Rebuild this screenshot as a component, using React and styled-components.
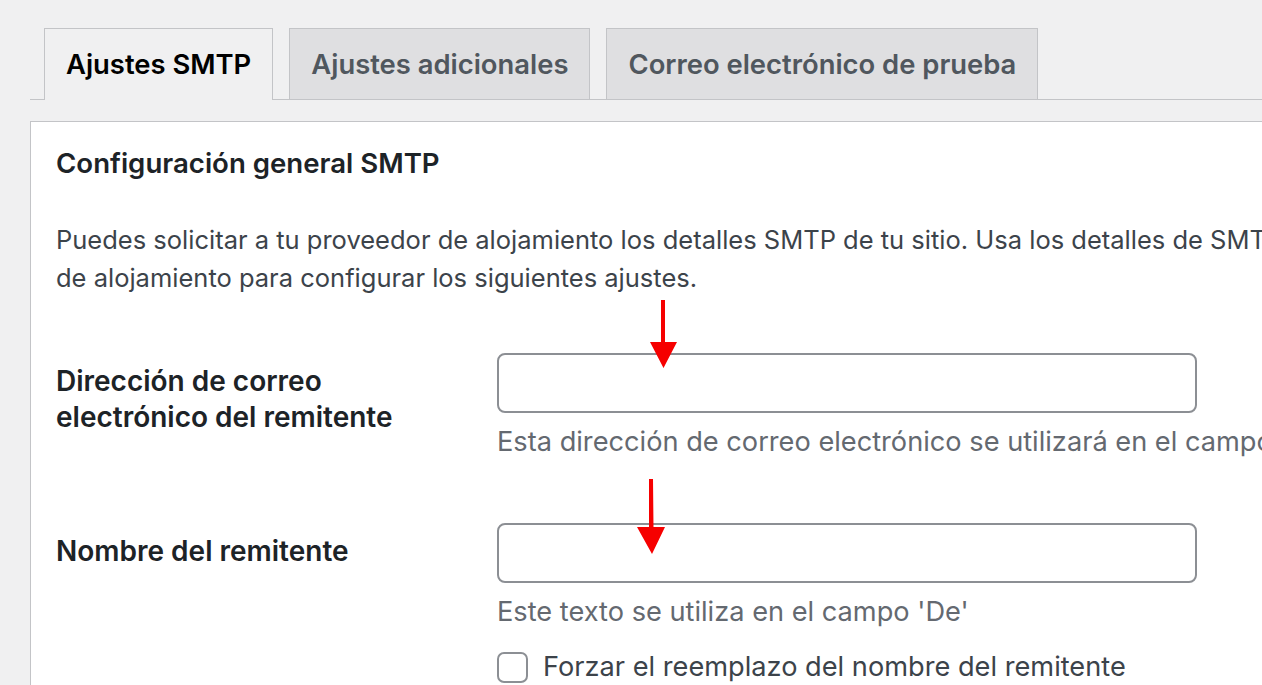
import React from 'react';
import styled, { createGlobalStyle } from 'styled-components';

const GlobalStyle = createGlobalStyle`
  html, body {
    margin: 0;
    padding: 0;
    background: #f0f0f1;
    overflow: hidden;
  }
  body {
    font-family: Inter, "Noto Sans", "Liberation Sans", sans-serif;
    color: #3c434a;
  }
`;

const Page = styled.div`
  position: relative;
  width: 1262px;
  height: 685px;
  padding: 28px 0 0 30px;
  box-sizing: border-box;
  overflow: hidden;
`;

const TabBar = styled.nav`
  display: flex;
  gap: 16px;
  padding-left: 14px;
  border-bottom: 1px solid #c3c4c7;
  margin-right: -30px;
`;

const Tab = styled.a`
  display: flex;
  align-items: center;
  padding: 0 21px 1px;
  box-sizing: border-box;
  border: 1px solid #c3c4c7;
  border-bottom: none;
  margin-bottom: ${p => (p.$active ? '-1px' : '0')};
  height: ${p => (p.$active ? '72px' : '71px')};
  background: ${p => (p.$active ? '#f0f0f1' : '#dfdfe1')};
  color: ${p => (p.$active ? '#000' : '#50575e')};
  font-size: 27.4px;
  font-weight: 600;
  white-space: nowrap;
`;

const Panel = styled.div`
  margin-top: 21px;
  width: 1300px;
  min-height: 600px;
  background: #fff;
  border: 1px solid #c3c4c7;
  padding: 26px 25px 0;
  box-sizing: border-box;
`;

const Heading = styled.h2`
  margin: 0;
  font-size: 27.6px;
  line-height: 30px;
  font-weight: 600;
  color: #1d2327;
`;

const Intro = styled.p`
  margin: 43px 0 0;
  font-size: 25.5px;
  line-height: 38px;
  color: #3c434a;
  white-space: nowrap;
`;

const FormRow = styled.div`
  display: grid;
  grid-template-columns: 441px 1fr;
  margin-top: ${p => p.$top}px;
`;

const Label = styled.label`
  padding-top: ${p => p.$pad}px;
  font-size: 28px;
  line-height: 36px;
  font-weight: 600;
  color: #1d2327;
`;

const Field = styled.div`
  display: flex;
  flex-direction: column;
`;

const TextInput = styled.input`
  width: 700px;
  height: 60px;
  box-sizing: border-box;
  border: 2px solid #8c8f94;
  border-radius: 8px;
  background: #fff;
  padding: 0 16px;
  font: inherit;
  font-size: 26px;
  outline: none;
`;

const Help = styled.p`
  margin: 11px 0 0;
  font-size: 27.2px;
  line-height: 36px;
  color: #646970;
  white-space: nowrap;
`;

const CheckRow = styled.label`
  display: flex;
  align-items: center;
  gap: 15px;
  margin-top: 19px;
  font-size: 27.2px;
  line-height: 36px;
  color: #3c434a;
  white-space: nowrap;
`;

const Box = styled.span`
  flex: none;
  width: 31px;
  height: 31px;
  box-sizing: border-box;
  border: 2px solid #8c8f94;
  border-radius: 7px;
  background: #fff;
`;

const Arrow = styled.svg`
  position: absolute;
  left: ${p => p.$x}px;
  top: ${p => p.$y}px;
  overflow: visible;
`;

const RedArrow = ({ x, y, points }) => (
  <Arrow $x={x} $y={y} width="40" height="80" viewBox="0 0 40 80">
    <polygon points={points} fill="#f60000" />
  </Arrow>
);

export default function App() {
  return (
    <>
      <GlobalStyle />
      <Page>
        <TabBar>
          <Tab $active>Ajustes SMTP</Tab>
          <Tab>Ajustes adicionales</Tab>
          <Tab>Correo electrónico de prueba</Tab>
        </TabBar>
        <Panel>
          <Heading>Configuración general SMTP</Heading>
          <Intro>
            Puedes solicitar a tu proveedor de alojamiento los detalles SMTP de tu sitio. Usa los detalles de SMTP de tu proveedor
            <br />
            de alojamiento para configurar los siguientes ajustes.
          </Intro>
          <FormRow $top={56}>
            <Label $pad={10}>
              Dirección de correo
              <br />
              electrónico del remitente
            </Label>
            <Field>
              <TextInput type="text" />
              <Help>Esta dirección de correo electrónico se utilizará en el campo 'De'.</Help>
            </Field>
          </FormRow>
          <FormRow $top={63}>
            <Label $pad={10}>Nombre del remitente</Label>
            <Field>
              <TextInput type="text" />
              <Help>Este texto se utiliza en el campo 'De'</Help>
              <CheckRow>
                <Box />
                Forzar el reemplazo del nombre del remitente
              </CheckRow>
            </Field>
          </FormRow>
        </Panel>
        <RedArrow x={650} y={300} points="11,0 15,0 15,42 27,42 13.5,68 0,42 11,42" />
        <RedArrow x={637} y={479} points="12,0 16,0 16.5,48 28,48 15,75 0,48 12,48" />
      </Page>
    </>
  );
}
